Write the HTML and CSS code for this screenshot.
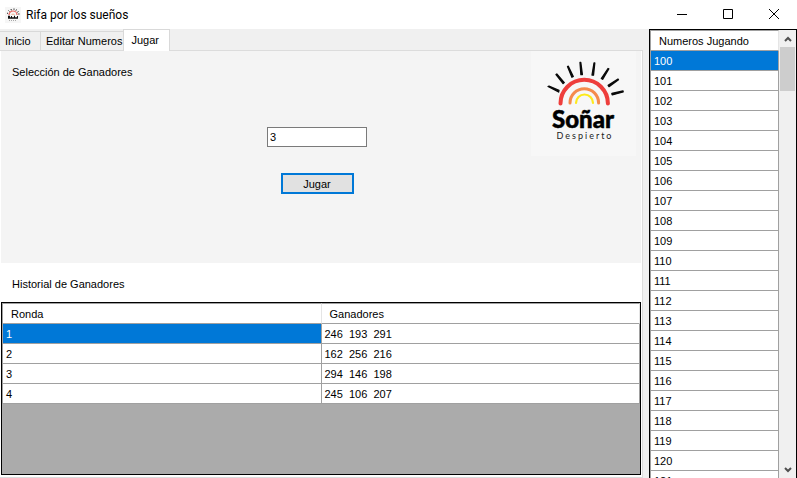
FILE: index.html
```html
<!DOCTYPE html>
<html lang="es">
<head>
<meta charset="utf-8">
<title>Rifa por los sueños</title>
<link rel="stylesheet" href="styles.css">
</head>
<body>
<header class="titlebar">
  <svg class="app-icon" viewBox="0 0 16 16" aria-hidden="true">
    <rect width="16" height="16" fill="#f6f6f6"/>
    <path d="M4 8a4 4 0 0 1 8 0" fill="none" stroke="#e8605a" stroke-width="1.2"/>
    <path d="M6.5 8a1.7 1.7 0 0 1 3 0" fill="none" stroke="#f3b08a"/>
    <path d="M2 6l1 .5M3.500 3.500l1 1M6 2l.4 1.300M9 1.500v1.300M11.500 2.500l-.6 1.200M13.500 4.500l-1.200.8M14.500 7h-1.300" stroke="#222" fill="none"/>
    <path d="M3 9.500h2M3 11h10M6 9.700h1M9 9.500h1M12 9.700h1" stroke="#111" stroke-width="1.500"/>
    <path d="M4 13.500h8" stroke="#aaa" stroke-dasharray="1 1"/>
  </svg>
  <h1 class="title">Rifa por los sueños</h1>
  <div class="window-controls">
    <button class="window-button" aria-label="Minimizar"><svg viewBox="0 0 12 12"><path d="M1 5.500h10"/></svg></button>
    <button class="window-button" aria-label="Maximizar"><svg viewBox="0 0 12 12"><path d="M1.500 .5h9v9h-9z"/></svg></button>
    <button class="window-button" aria-label="Cerrar"><svg viewBox="0 0 12 12"><path d="M1 0l10 10M11 0L1 10"/></svg></button>
  </div>
</header>
<main class="workspace">
  <section class="left">
    <nav class="tabs" role="tablist">
      <button class="tab first" role="tab">Inicio</button>
      <button class="tab" role="tab">Editar Numeros</button>
      <button class="tab active" role="tab" aria-selected="true">Jugar</button>
    </nav>
    <div class="page">
      <form class="draw">
        <label class="caption" for="count">Selección de Ganadores</label>
        <div class="controls">
          <input class="count" id="count" type="text" value="3">
          <button class="play" type="button">Jugar</button>
        </div>
        <svg class="logo" viewBox="0 0 105 105" role="img" aria-label="Soñar Despierto">
          <rect width="105" height="105" fill="#f7f7f7"/>
          <g fill="none" stroke-linecap="round">
            <path d="M29.500 52.500a23.700 23.700 0 0 1 47.400 0" stroke="#ee3e3c" stroke-width="4"/>
            <path d="M39 52a14.300 14.300 0 0 1 28.600 0" stroke="#f58b4c" stroke-width="3"/>
            <path d="M45 52a8.500 8.500 0 0 1 17 0" stroke="#fdea1c" stroke-width="2.200"/>
          </g>
          <g fill="#0a0a0a" stroke="#0a0a0a" stroke-width="1.300" stroke-linejoin="round">
            <path d="M17 35.500l1-.4 10 4.300-.4 1.600z"/>
            <path d="M25 23.500l.8-.5 7.500 8.600-1.200 1z"/>
            <path d="M36.500 15.500l.8-.3 5 10.300-1.400.7z"/>
            <path d="M49 11.500h.8l1.600 12-1.500.2z"/>
            <path d="M63 12h.8l-1.300 12.200-1.500-.2z"/>
            <path d="M77 17.500l.8.400-6.200 10.400-1.300-.8z"/>
            <path d="M87 28l.5.800-9.500 6.800-.9-1.200z"/>
            <path d="M92 40l.2.900-11 3-.4-1.400z"/>
          </g>
          <text class="logo-name" x="52" y="77" text-anchor="middle">Soñar</text>
          <text class="logo-sub" x="54" y="88" text-anchor="middle">Despierto</text>
        </svg>
      </form>
      <h2 class="caption history-title">Historial de Ganadores</h2>
      <div class="history">
        <table class="grid">
          <thead><tr><th>Ronda</th><th>Ganadores</th></tr></thead>
          <tbody>
            <tr><td class="selected">1</td><td>246&nbsp; 193&nbsp; 291</td></tr>
            <tr><td>2</td><td>162&nbsp; 256&nbsp; 216</td></tr>
            <tr><td>3</td><td>294&nbsp; 146&nbsp; 198</td></tr>
            <tr><td>4</td><td>245&nbsp; 106&nbsp; 207</td></tr>
          </tbody>
        </table>
      </div>
    </div>
  </section>
  <aside class="players">
    <div class="players-list">
      <table class="grid">
        <thead><tr><th>Numeros Jugando</th></tr></thead>
        <tbody>
          <tr><td class="selected">100</td></tr><tr><td>101</td></tr><tr><td>102</td></tr><tr><td>103</td></tr>
          <tr><td>104</td></tr><tr><td>105</td></tr><tr><td>106</td></tr><tr><td>107</td></tr>
          <tr><td>108</td></tr><tr><td>109</td></tr><tr><td>110</td></tr><tr><td>111</td></tr>
          <tr><td>112</td></tr><tr><td>113</td></tr><tr><td>114</td></tr><tr><td>115</td></tr>
          <tr><td>116</td></tr><tr><td>117</td></tr><tr><td>118</td></tr><tr><td>119</td></tr>
          <tr><td>120</td></tr><tr><td>121</td></tr>
        </tbody>
      </table>
    </div>
    <div class="scrollbar">
      <button class="scroll-button" aria-label="Subir"><svg viewBox="0 0 8 6"><path d="M1 5l3-3 3 3"/></svg></button>
      <div class="thumb"></div>
      <button class="scroll-button" aria-label="Bajar"><svg viewBox="0 0 8 6"><path d="M1 1l3 3 3-3"/></svg></button>
    </div>
  </aside>
</main>
</body>
</html>
```
FILE: styles.css
```css
* { box-sizing: border-box; }
body {
  margin: 0;
  height: 100vh;
  display: flex;
  flex-direction: column;
  overflow: hidden;
  background: #f0f0f0;
  color: #000;
  font: 11px/16px "Liberation Sans", Arial, sans-serif;
}
button, input { font: inherit; color: inherit; }
h1, h2 { margin: 0; font-weight: normal; }

.titlebar {
  display: flex;
  align-items: center;
  flex: none;
  height: 29px;
  padding-left: 5px;
  background: #fff;
}
.app-icon { width: 16px; height: 16px; }
.title {
  margin-left: 5px;
  font: 12px/16px Roboto, "Open Sans", sans-serif;
}
.window-controls { display: flex; margin-left: auto; }
.window-button {
  width: 46px;
  height: 28px;
  padding: 0;
  border: 0;
  background: none;
}
.window-button svg {
  display: block;
  width: 12px;
  height: 12px;
  margin: 0 auto;
  fill: none;
  stroke: #000;
}

.workspace { display: flex; flex: 1; min-height: 0; gap: 6px; }
.left { display: flex; flex-direction: column; flex: 1; min-width: 0; }
.tabs { display: flex; align-items: flex-end; height: 21px; }
.tab {
  height: 19px;
  padding: 0 1px 0 5px;
  border: 1px solid #d9d9d9;
  border-width: 1px 0 0 1px;
  background: #f0f0f0;
  white-space: nowrap;
}
.tab.first { width: 40px; border-left: 0; text-align: left; }
.tab.active {
  height: 22px;
  margin-bottom: -1px;
  padding: 0 10px 2px 7px;
  border-right-width: 1px;
  background: #fff;
  z-index: 1;
}
.page {
  display: flex;
  flex-direction: column;
  flex: 1;
  min-height: 0;
  padding: 0 1px 2px;
  border: 1px solid #dcdcdc;
  border-left: 0;
  background: #fff;
}
.draw {
  display: grid;
  grid-template-columns: 1fr 190px 1fr;
  height: 212px;
  background: #f4f4f4;
}
.caption { padding: 13px 11px; }
.controls {
  display: flex;
  flex-direction: column;
  align-items: center;
  gap: 26px;
  padding: 76px 8px 0 0;
}
.count {
  width: 100px;
  height: 20px;
  padding: 0 2px;
  border: 1px solid #7a7a7a;
  background: #fff;
}
.play {
  width: 73px;
  height: 21px;
  padding: 0;
  border: 2px solid #0078d7;
  background: #e1e1e1;
}
.logo { justify-self: end; width: 105px; height: 105px; margin-right: 5px; }
.logo-name { font: 900 24px Lato, sans-serif; stroke: #000; stroke-width: 0.5px; }
.logo-sub { font: 9px Lato, sans-serif; letter-spacing: 2px; fill: #222; }
.history-title { font-size: 11px; line-height: 16px; height: 39px; }
.history {
  flex: 1;
  min-height: 0;
  border: 1px solid #000;
  background: #ababab;
}

.grid {
  width: 100%;
  table-layout: fixed;
  border-collapse: separate;
  border-spacing: 0;
  border-left: 1px solid #a0a0a0;
}
.grid th, .grid td {
  height: 20px;
  padding: 0 3px;
  border: solid #a0a0a0;
  border-width: 0 1px 1px 0;
  background: #fff;
  text-align: left;
  font-weight: normal;
}
.grid th {
  height: 21px;
  padding: 0 8px;
  border-top-width: 1px;
  border-right-color: #e5e5e5;
}
.grid td.selected { background: #0078d7; color: #fff; }

.players {
  display: flex;
  flex: none;
  width: 148px;
  min-height: 0;
  border: 1px solid #000;
  border-bottom: 0;
  background: #f0f0f0;
}
.players-list { flex: 1; overflow: hidden; }
.scrollbar { display: flex; flex-direction: column; width: 17px; }
.scroll-button {
  height: 17px;
  padding: 0;
  border: 0;
  background: #f0f0f0;
}
.scroll-button:last-child { margin-top: auto; }
.scroll-button svg {
  display: block;
  width: 8px;
  height: 6px;
  margin: 0 auto;
  fill: none;
  stroke: #505050;
  stroke-width: 2;
}
.thumb { width: 15px; height: 44px; margin: 0 1px; background: #cdcdcd; }
```
